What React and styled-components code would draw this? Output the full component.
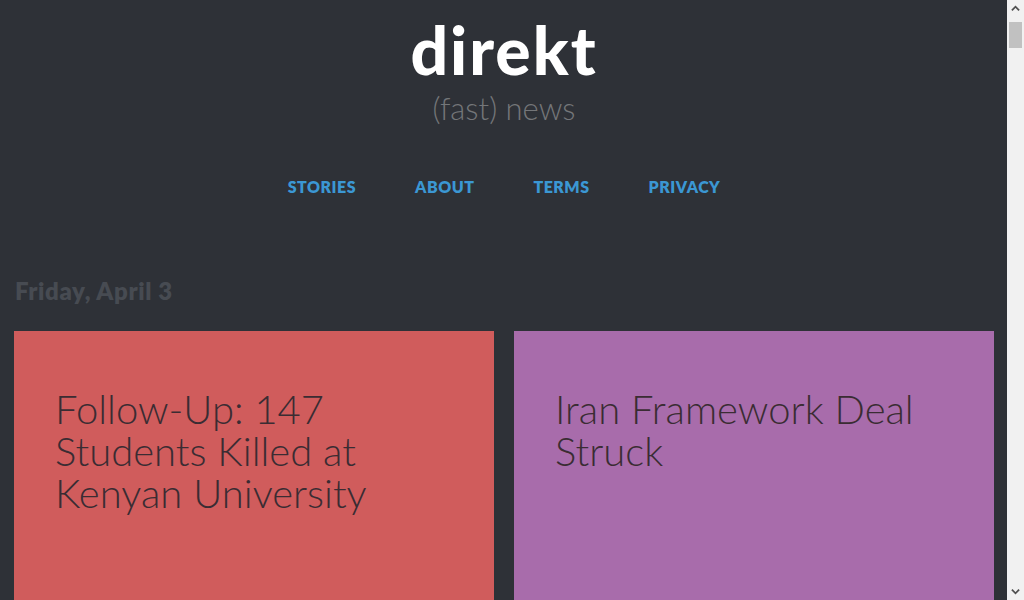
import React from 'react'
import styled, { createGlobalStyle } from 'styled-components'

const GlobalStyle = createGlobalStyle`
  html, body {
    margin: 0;
    padding: 0;
    background: #2e3137;
    overflow: hidden;
  }
  body {
    font-family: Lato, "Open Sans", sans-serif;
  }
`

const stories = [
    { title: 'Follow-Up: 147 Students Killed at Kenyan University', color: '#d05c5c' },
    { title: 'Iran Framework Deal Struck', color: '#a86cab' },
]

function App() {
    return (
        <Page>
            <GlobalStyle />
            <Header>
                <Logo>direkt</Logo>
                <Tagline>(fast) news</Tagline>
                <Nav>
                    <NavLink href="#">Stories</NavLink>
                    <NavLink href="#">About</NavLink>
                    <NavLink href="#">Terms</NavLink>
                    <NavLink href="#">Privacy</NavLink>
                </Nav>
            </Header>
            <Day>Friday, April 3</Day>
            <Grid>
                {stories.map((s) => (
                    <Card key={s.title} bg={s.color}>
                        <CardTitle>{s.title}</CardTitle>
                    </Card>
                ))}
            </Grid>
            <Scrollbar>
                <Arrow viewBox="0 0 10 6"><path d="M1 5 L5 1 L9 5" /></Arrow>
                <Track><Thumb /></Track>
                <Arrow viewBox="0 0 10 6"><path d="M1 1 L5 5 L9 1" /></Arrow>
            </Scrollbar>
        </Page>
    )
}

const Page = styled.div`
  height: 600px;
  overflow: hidden;
  background: #2e3137;
  padding: 0 30px 0 14px;
  box-sizing: border-box;
`

const Header = styled.header`
  display: flex;
  flex-direction: column;
  align-items: center;
  padding-top: 14px;
`

const Logo = styled.h1`
  margin: 0;
  color: #ffffff;
  font-size: 66px;
  font-weight: 900;
  line-height: 72px;
  letter-spacing: 2px;
`

const Tagline = styled.div`
  margin-top: 5px;
  color: #747679;
  font-size: 31px;
  font-weight: 300;
  line-height: 34px;
`

const Nav = styled.nav`
  display: flex;
  gap: 59px;
  margin-top: 53px;
`

const NavLink = styled.a`
  color: #3b97d3;
  font-size: 16px;
  font-weight: 800;
  text-transform: uppercase;
  text-decoration: none;
  line-height: 18px;
  letter-spacing: 0.5px;
`

const Day = styled.h2`
  margin: 81px 0 0 1px;
  color: #474b52;
  font-size: 24px;
  font-weight: 800;
  line-height: 28px;
  letter-spacing: 0.6px;
`

const Grid = styled.div`
  display: grid;
  grid-template-columns: 1fr 1fr;
  gap: 20px;
  margin-top: 26px;
`

const Card = styled.article`
  background: ${props => props.bg};
  min-height: 360px;
  padding: 57px 30px 40px 41px;
`

const CardTitle = styled.h3`
  margin: 0;
  color: #3a2c33;
  font-size: 40px;
  font-weight: 300;
  line-height: 42px;
`

const Scrollbar = styled.div`
  position: fixed;
  top: 0;
  right: 0;
  width: 17px;
  height: 100vh;
  background: #f1f1f1;
  display: flex;
  flex-direction: column;
  align-items: center;
`

const Arrow = styled.svg`
  width: 9px;
  height: 17px;
  padding: 0 4px;
  fill: none;
  stroke: #505050;
  stroke-width: 2;
  flex-shrink: 0;
`

const Track = styled.div`
  flex: 1;
  width: 100%;
  padding: 5px 2px 0;
  box-sizing: border-box;
`

const Thumb = styled.div`
  height: 26px;
  background: #c1c1c1;
`

export default App
